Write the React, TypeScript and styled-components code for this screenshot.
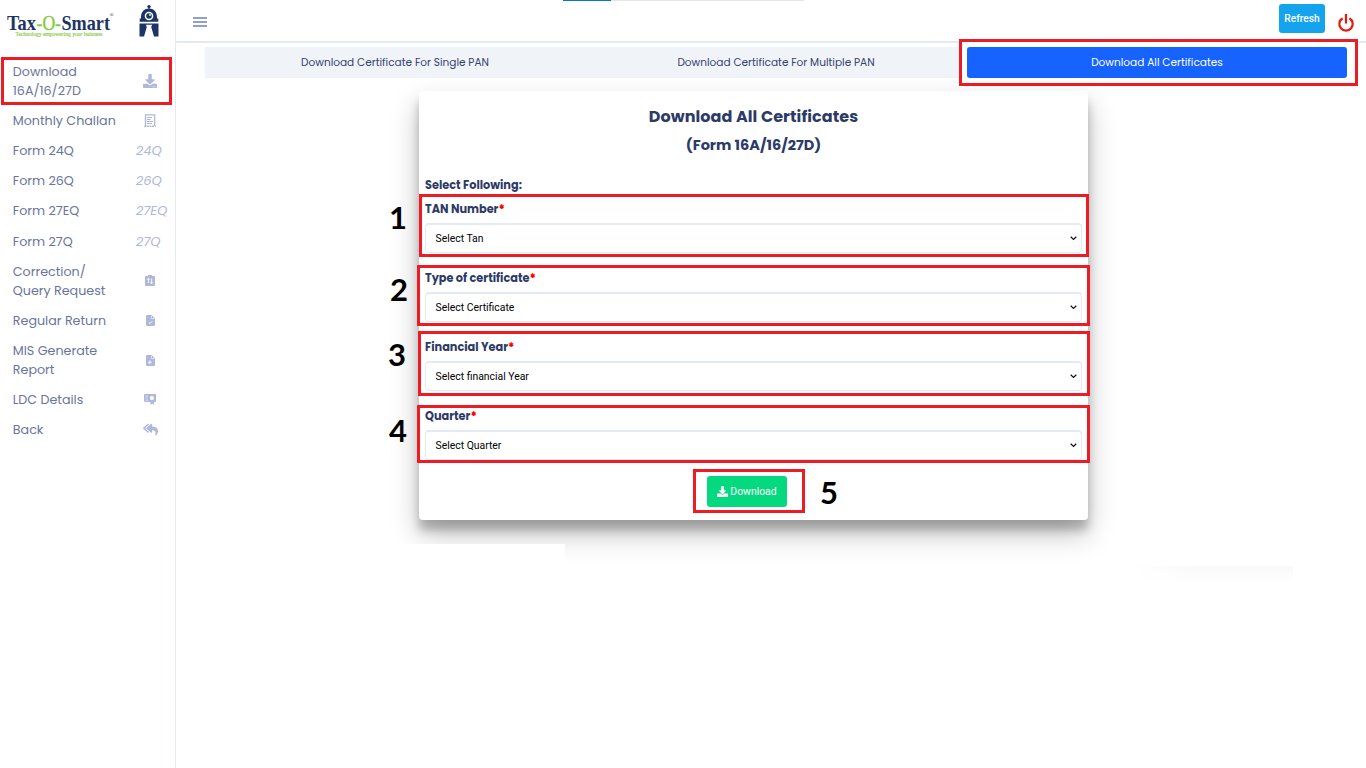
import React from 'react';
import styled, { createGlobalStyle } from 'styled-components';
import { FaDownload, FaReplyAll } from 'react-icons/fa';

const GlobalStyle = createGlobalStyle`
  * { box-sizing: border-box; }
  body {
    margin: 0;
    background: #fff;
    color: #2c3a67;
    font-family: Poppins, Inter, 'Open Sans', sans-serif;
    font-feature-settings: 'cv11';
    overflow: hidden;
  }
`;

const Page = styled.div`
  display: flex;
  height: 768px;
`;

const Sidebar = styled.aside`
  width: 176px;
  flex: none;
  border-right: 1px solid #e1e9f5;
`;

const Brand = styled.div`
  display: flex;
  height: 56px;
  padding: 4px 0 0 6px;
`;

const Wordmark = styled.svg`
  width: 112px;
  height: 36px;
  flex: none;
`;

const Mascot = styled.svg`
  width: 22px;
  height: 34px;
  margin-left: 20px;
`;

const Frame = styled.span<{ $top: number; $left: number; $w: number; $h: number }>`
  position: absolute;
  top: ${(p) => p.$top}px;
  left: ${(p) => p.$left}px;
  width: ${(p) => p.$w}px;
  height: ${(p) => p.$h}px;
  border: 3px solid #ed1c24;
  pointer-events: none;
`;

const Step = styled.span<{ $top: number; $left: number }>`
  position: absolute;
  top: ${(p) => p.$top}px;
  left: ${(p) => p.$left}px;
  font: 700 31px/32px Lato, sans-serif;
  color: #000;
`;

const Menu = styled.nav`
  display: flex;
  flex-direction: column;
`;

const MenuItem = styled.a`
  position: relative;
  display: flex;
  align-items: center;
  padding: 5.6px 0 5.6px 12.8px;
  font-size: 12.7px;
  line-height: 19px;
  color: #69759c;
`;

const MenuLabel = styled.span`
  width: 122.9px;
  white-space: pre-line;
`;

const MenuIcon = styled.span`
  display: flex;
  justify-content: center;
  width: 29px;
  color: #b0b7dc;
`;

const MenuCode = styled.i`
  color: #b0b7dc;
  font-size: 13.1px;
`;

const Main = styled.main`
  flex: 1;
  min-width: 0;
`;

const Header = styled.header`
  position: relative;
  display: flex;
  align-items: flex-start;
  height: 43px;
  padding: 4px 12px 0 17px;
  border-bottom: 2px solid #e3e9f5;
`;

const Progress = styled.div`
  position: absolute;
  top: 0;
  left: 387px;
  width: 241px;
  height: 1px;
  background: linear-gradient(to right, #0078d4 48px, #e6e6e6 48px);
`;

const Burger = styled.div`
  display: flex;
  flex-direction: column;
  gap: 2px;
  margin: 13px auto 0 0;
  span {
    width: 14px;
    height: 2px;
    background: #929fca;
  }
`;

const Refresh = styled.button`
  width: 46px;
  height: 29px;
  padding: 0;
  border: 0;
  border-radius: 3px;
  background: #14a4ee;
  color: #fff;
  font: 500 10.2px Roboto, sans-serif;
`;

const Power = styled.svg`
  width: 18px;
  height: 20px;
  margin: 9px -1px 0 12px;
`;

const Tabs = styled.div`
  display: flex;
  width: 1142px;
  height: 31px;
  margin: 4px 0 0 29px;
  background: #f0f4f9;
`;

const Tab = styled.div<{ $active?: boolean }>`
  position: relative;
  width: ${(p) => (p.$active ? 380 : 381)}px;
  padding-right: ${(p) => (p.$active ? 0 : 1)}px;
  border-radius: 3px;
  font-size: 10.55px;
  line-height: 31px;
  text-align: center;
  background: ${(p) => (p.$active ? '#1763ff' : 'transparent')};
  color: ${(p) => (p.$active ? '#fff' : '#35426e')};
`;

const TabFrame = styled(Frame)`
  box-shadow: inset 0 0 0 5px #fff;
`;

const TabText = styled.span`
  position: relative;
`;

const Card = styled.section`
  position: relative;
  width: 669px;
  height: 429px;
  margin: 13px 0 0 243px;
  padding: 12px 6px 0;
  border-radius: 4px;
  background: #fff;
  box-shadow: 0 14px 28px rgba(0, 0, 0, 0.25), 0 10px 10px rgba(0, 0, 0, 0.22);
`;

const Title = styled.h1`
  margin: 0;
  font-size: 16px;
  font-weight: 700;
  line-height: 28px;
  letter-spacing: 0.08px;
  text-align: center;
`;

const Subtitle = styled.h2`
  margin: 0 0 18px;
  font-size: 14.5px;
  font-weight: 700;
  line-height: 28px;
  text-align: center;
`;

const Lead = styled.p`
  margin: 0 0 7px;
  font-size: 11.3px;
  font-weight: 700;
  line-height: 17px;
`;

const Fields = styled.div`
  display: grid;
  gap: 17px;
  margin-bottom: 16px;
`;

const FieldLabel = styled.label`
  display: block;
  margin-bottom: 6px;
  font-size: 11.3px;
  font-weight: 700;
  line-height: 16px;
  b {
    color: #f00;
  }
`;

const Select = styled.div`
  display: flex;
  align-items: center;
  justify-content: space-between;
  height: 30px;
  padding: 0 4px 0 9.5px;
  border: 1px solid #e3eaf5;
  border-top-width: 2px;
  border-radius: 4px;
  color: #000;
  font: 10.4px Roboto, sans-serif;
`;

const Download = styled.button`
  display: flex;
  align-items: center;
  justify-content: center;
  gap: 2px;
  width: 80px;
  height: 31px;
  margin: 0 0 0 282px;
  padding: 0;
  border: 0;
  border-radius: 3px;
  background: #05d980;
  color: #fff;
  font: 400 10.4px Roboto, sans-serif;
`;

const ShadowCut = styled.div`
  position: absolute;
  top: 453px;
  left: -60px;
  width: 206px;
  height: 30px;
  background: #fff;
`;

const Smudge = styled.div`
  width: 160px;
  height: 15px;
  margin: 46px 0 0 957px;
  background: linear-gradient(to right, #fff, rgba(255, 255, 255, 0) 60px),
    linear-gradient(#f9f9f9, #fefefe);
`;

const ReceiptIcon = () => (
  <svg width="12" height="13" viewBox="0 0 12 13" fill="none" stroke="currentColor">
    <path d="M1.500 12V.8h9.200V12" strokeWidth="1.300" />
    <path d="M.3 12.200h11.400" strokeWidth="1.500" strokeDasharray="2 .6" />
    <path d="M3 3.500h5M3 5.500h3.500M3 7.500h6M3 9.500h5" strokeWidth="1.100" />
  </svg>
);

const ClipboardIcon = () => (
  <svg width="10" height="11" viewBox="0 0 10 11">
    <path fill="currentColor" d="M1 1h2V0h4v1h2a1 1 0 0 1 1 1v8a1 1 0 0 1-1 1H1a1 1 0 0 1-1-1V2a1 1 0 0 1 1-1z" />
    <path fill="none" stroke="#fff" strokeWidth=".9" d="M3.400 8V3.200M2 4.700l1.400-1.500 1.400 1.500M6.600 3.600v5M5.200 7.200l1.400 1.500L8 7.200" />
  </svg>
);

const FileIcon = ({ mark }: { mark: string }) => (
  <svg width="9" height="11" viewBox="0 0 9 11">
    <path fill="currentColor" d="M1 0h4.600L9 3.400V10a1 1 0 0 1-1 1H1a1 1 0 0 1-1-1V1a1 1 0 0 1 1-1z" />
    <path fill="none" stroke="#fff" strokeWidth=".9" d={mark} />
    <path fill="none" stroke="#fff" strokeWidth=".6" d="M5.500 .8v2.800h2.800" />
  </svg>
);

const CertificateIcon = () => (
  <svg width="12" height="11" viewBox="0 0 12 11">
    <path fill="currentColor" d="M1 0h10a1 1 0 0 1 1 1v6a1 1 0 0 1-1 1h-1v3L8.500 9.500 6.500 11V8H1a1 1 0 0 1-1-1V1a1 1 0 0 1 1-1z" />
    <path stroke="#fff" strokeWidth=".6" d="M1.500 2.200h2.500M1.500 4.200h2M1.500 6.200h2.500" />
    <circle cx="7.900" cy="4.100" r="2.100" fill="#fff" />
  </svg>
);

const Chevron = () => (
  <svg width="7" height="5" viewBox="0 0 7 5" fill="none" stroke="#111" strokeWidth="1.200">
    <path d="M.7 .8l2.800 2.700 2.800-2.700" />
  </svg>
);

type MenuEntry = { label: string; icon?: React.ReactNode; code?: string; framed?: boolean };

const menu: MenuEntry[] = [
  { label: 'Download\n16A/16/27D', icon: <FaDownload size={14} />, framed: true },
  { label: 'Monthly Challan', icon: <ReceiptIcon /> },
  { label: 'Form 24Q', code: '24Q' },
  { label: 'Form 26Q', code: '26Q' },
  { label: 'Form 27EQ', code: '27EQ' },
  { label: 'Form 27Q', code: '27Q' },
  { label: 'Correction/\nQuery Request', icon: <ClipboardIcon /> },
  { label: 'Regular Return', icon: <FileIcon mark="M2.700 7.300l1.300 1.300 2.300-2.400" /> },
  { label: 'MIS Generate\nReport', icon: <FileIcon mark="M1.800 7.300h4M3.800 5.300v4" /> },
  { label: 'LDC Details', icon: <CertificateIcon /> },
  { label: 'Back', icon: <FaReplyAll size={15} /> },
];

const fields = [
  { label: 'TAN Number', value: 'Select Tan' },
  { label: 'Type of certificate', value: 'Select Certificate' },
  { label: 'Financial Year', value: 'Select financial Year' },
  { label: 'Quarter', value: 'Select Quarter' },
];

export default function App() {
  return (
    <Page>
      <GlobalStyle />
      <Sidebar>
        <Brand>
          <Wordmark viewBox="0 0 112 36" fontFamily="'Liberation Serif', serif">
            <text x="1" y="25.500" fontSize="22" fontWeight="700" fill="#1d3566" textLength="29" lengthAdjust="spacingAndGlyphs">Tax</text>
            <text x="30.500" y="25.500" fontSize="22" fill="#84cb3c" stroke="#84cb3c" strokeWidth=".4" textLength="24.500" lengthAdjust="spacingAndGlyphs">-O-</text>
            <text x="55.500" y="25.500" fontSize="22" fontWeight="700" fill="#1d3566" textLength="48.500" lengthAdjust="spacingAndGlyphs">Smart</text>
            <text x="103.500" y="13" fontSize="5.500" fill="#1d3566">®</text>
            <text x="9.500" y="32" fontSize="6.500" fill="#84cb3c" stroke="#84cb3c" strokeWidth=".15" textLength="87" lengthAdjust="spacingAndGlyphs">Technology empowering your buisness</text>
          </Wordmark>
          <Mascot viewBox="0 0 22 34">
            <g fill="#1d3566">
              <circle cx="11" cy="2.600" r="1.700" />
              <path d="M10.500 3h1v2h-1z" />
              <path d="M3 13C3 8 6.500 4.600 11 4.600S19 8 19 13v1.500h1.300v3.300H1.700v-3.300H3z" />
              <path d="M1.500 19.500h19V32.500h-4.500L13.200 23l1-2.300h-6.400l1 2.300L6 32.500H1.500z" />
            </g>
            <circle cx="11" cy="12" r="4.300" fill="#fff" />
            <circle cx="11" cy="12" r="2.800" fill="#1d3566" />
            <circle cx="12" cy="11" r=".9" fill="#fff" />
          </Mascot>
        </Brand>
        <Menu>
          {menu.map((m) => (
            <MenuItem key={m.label}>
              <MenuLabel>{m.label}</MenuLabel>
              {m.code ? <MenuCode>{m.code}</MenuCode> : <MenuIcon>{m.icon}</MenuIcon>}
              {m.framed && <Frame $top={1} $left={1} $w={171} $h={48} />}
            </MenuItem>
          ))}
        </Menu>
      </Sidebar>
      <Main>
        <Header>
          <Progress />
          <Burger>
            <span />
            <span />
            <span />
          </Burger>
          <Refresh>Refresh</Refresh>
          <Power viewBox="0 0 18 20" fill="none" stroke="#e8190b" strokeWidth="2.200">
            <path d="M5.600 5.200a6.700 6.700 0 1 0 6.800 0M9 1v9.500" />
          </Power>
        </Header>
        <Tabs>
          <Tab>Download Certificate For Single PAN</Tab>
          <Tab>Download Certificate For Multiple PAN</Tab>
          <Tab $active>
            <TabFrame $top={-8} $left={-8} $w={399} $h={47} />
            <TabText>Download All Certificates</TabText>
          </Tab>
        </Tabs>
        <Card>
          <Title>Download All Certificates</Title>
          <Subtitle>(Form 16A/16/27D)</Subtitle>
          <Lead>Select Following:</Lead>
          <Fields>
            {fields.map((f) => (
              <div key={f.label}>
                <FieldLabel>
                  {f.label}
                  <b>*</b>
                </FieldLabel>
                <Select>
                  {f.value}
                  <Chevron />
                </Select>
              </div>
            ))}
          </Fields>
          <Download>
            <FaDownload size={11} />
            Download
          </Download>
          <ShadowCut />
          <Frame $top={103} $left={0} $w={670} $h={63} />
          <Frame $top={174} $left={-2} $w={673} $h={61} />
          <Frame $top={240} $left={-1} $w={672} $h={65} />
          <Frame $top={314} $left={-2} $w={673} $h={58} />
          <Frame $top={378} $left={274} $w={112} $h={44} />
          <Step $top={110} $left={-30}>1</Step>
          <Step $top={182} $left={-29}>2</Step>
          <Step $top={247} $left={-31}>3</Step>
          <Step $top={323} $left={-30}>4</Step>
          <Step $top={385} $left={401}>5</Step>
        </Card>
        <Smudge />
      </Main>
    </Page>
  );
}
